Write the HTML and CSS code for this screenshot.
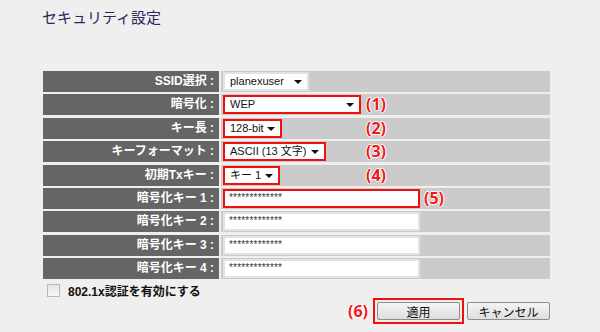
FILE: index.html
```html
<html>
    <head>
        <title>セキュリティ設定</title>
        <meta charset="utf-8">
        <link rel="stylesheet" href="styles.css">
    </head>
    <body>
        <h1 class="page-title">セキュリティ設定</h1>

        <div class="settings">
            <div class="label">SSID選択 :</div>
            <div class="value">
                <div class="select w-ssid">planexuser</div>
            </div>

            <div class="label">暗号化 :</div>
            <div class="value">
                <div class="slot"><div class="select mark w-enc">WEP</div></div>
                <span class="note">(1)</span>
            </div>

            <div class="label">キー長 :</div>
            <div class="value">
                <div class="slot"><div class="select mark w-len">128-bit</div></div>
                <span class="note">(2)</span>
            </div>

            <div class="label">キーフォーマット :</div>
            <div class="value">
                <div class="slot"><div class="select mark w-fmt">ASCII (13 文字)</div></div>
                <span class="note">(3)</span>
            </div>

            <div class="label">初期Txキー :</div>
            <div class="value">
                <div class="slot"><div class="select mark w-tx">キー 1</div></div>
                <span class="note">(4)</span>
            </div>

            <div class="label">暗号化キー 1 :</div>
            <div class="value">
                <div class="field mark">*************</div>
                <span class="note">(5)</span>
            </div>

            <div class="label">暗号化キー 2 :</div>
            <div class="value"><div class="field">*************</div></div>

            <div class="label">暗号化キー 3 :</div>
            <div class="value"><div class="field">*************</div></div>

            <div class="label">暗号化キー 4 :</div>
            <div class="value"><div class="field">*************</div></div>
        </div>

        <label class="check-row">
            <span class="checkbox"></span>
            802.1x認証を有効にする
        </label>

        <div class="actions">
            <span class="note">(6)</span>
            <div class="btn-frame"><button class="btn">適用</button></div>
            <button class="btn">キャンセル</button>
        </div>
    </body>
</html>
```

FILE: styles.css
```css
body {
    margin: 0;
    background: #efefef;
    font-family: "Liberation Sans", "Noto Sans CJK JP", sans-serif;
    width: 600px;
    height: 332px;
    overflow: hidden;
}

.page-title {
    margin: 0;
    padding: 6px 0 0 42px;
    height: 71px;
    box-sizing: border-box;
    font-size: 15px;
    font-weight: normal;
    color: #28285a;
}

.settings {
    margin-left: 43px;
    width: 507px;
    display: grid;
    grid-template-columns: 176px 1fr;
    grid-auto-rows: 21px;
    gap: 2.4px 2px;
}

.label {
    background: #656565;
    color: #fff;
    font-size: 12px;
    font-weight: bold;
    text-align: right;
    padding-right: 5px;
    line-height: 21px;
    white-space: pre;
}

.value {
    background: #cbcbcb;
    display: flex;
    align-items: center;
    padding-left: 2px;
}

.slot {
    width: 143px;
}

.select,
.field {
    box-sizing: border-box;
    height: 19px;
    background: #fff;
    border: 2px solid #e2e2e2;
    font-size: 11px;
    color: #111;
    line-height: 15px;
    padding-left: 5px;
    position: relative;
}

.select::after {
    content: "";
    position: absolute;
    right: 5px;
    top: 6px;
    border-left: 4px solid transparent;
    border-right: 4px solid transparent;
    border-top: 4px solid #111;
}

.w-ssid { width: 86px; }
.w-enc { width: 138px; }
.w-len { width: 59px; }
.w-fmt { width: 103px; }
.w-tx { width: 57px; }

.field {
    width: 197px;
    font-size: 10px;
    letter-spacing: 0.2px;
    color: #333;
    line-height: 13px;
    padding-left: 4px;
}

.mark {
    border-color: #f01010;
}

.note {
    color: #f01a1a;
    font-family: "Noto Sans", sans-serif;
    font-weight: bold;
    font-size: 16px;
    line-height: 21px;
    text-shadow: 1px 0 #fff, -1px 0 #fff, 0 1px #fff, 0 -1px #fff;
}

.value .field + .note {
    margin-left: 4px;
}

.check-row {
    display: flex;
    align-items: center;
    gap: 8px;
    margin: 3px 0 0 47px;
    height: 16px;
    font-size: 12px;
    font-weight: bold;
    color: #111;
}

.checkbox {
    width: 11px;
    height: 11px;
    border: 1px solid #b8b8b8;
    background: linear-gradient(#e4e4e4, #f8f8f8);
}

.actions {
    display: flex;
    justify-content: flex-end;
    align-items: center;
    gap: 5px;
    width: 550px;
}

.btn-frame {
    border: 2px solid #f01010;
    padding: 2px;
    margin-right: -2px;
}

.btn {
    width: 83px;
    height: 18px;
    font-family: "Liberation Sans", "Noto Sans CJK JP", sans-serif;
    font-size: 12px;
    color: #111;
    border: 1px solid #8e8e8e;
    border-radius: 2px;
    background: linear-gradient(#f4f4f4, #dedede);
    padding: 0;
    display: block;
}
```
